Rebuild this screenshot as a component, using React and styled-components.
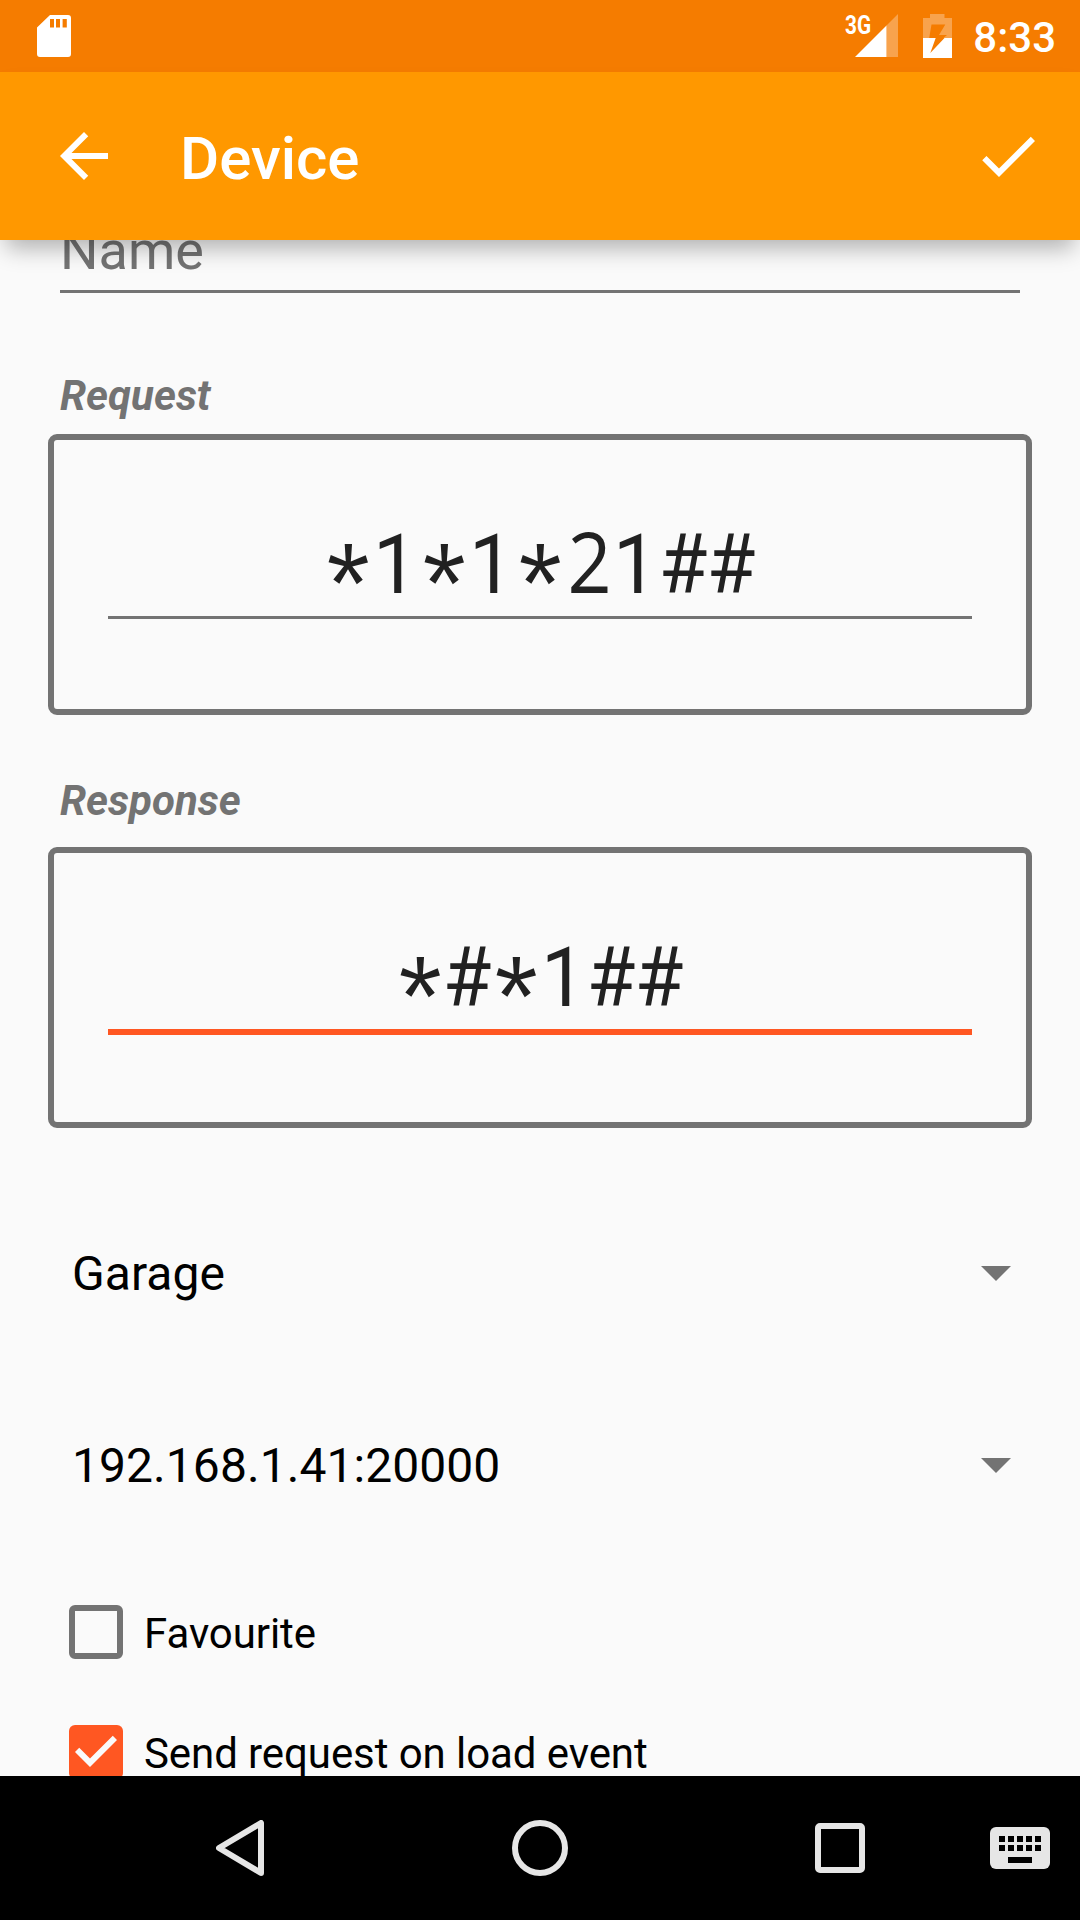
import React from 'react';
import styled, { createGlobalStyle } from 'styled-components';

const Global = createGlobalStyle`
  *, *::before, *::after { box-sizing: border-box; }
  body { margin: 0; background: #fafafa; }
  svg { display: block; flex: none; }
`;

const Screen = styled.div`
  width: 1080px;
  height: 1920px;
  display: flex;
  flex-direction: column;
  overflow: hidden;
  background: #fafafa;
  font-family: Roboto, 'Noto Sans', sans-serif;
`;

const StatusBar = styled.header`
  height: 72px;
  flex: none;
  display: flex;
  align-items: flex-start;
  padding: 14px 24px 0 37px;
  background: #f57c00;
  color: #fff;
`;

const StatusSpacer = styled.div`
  flex: 1;
`;

const NetworkLabel = styled.span`
  width: 10px;
  white-space: nowrap;
  font-size: 26px;
  line-height: 22px;
  font-weight: 700;
  transform: scaleX(0.8);
  transform-origin: left center;
`;

const Clock = styled.time`
  margin: -1px 0 0 21px;
  font-size: 42px;
  line-height: 50px;
  font-weight: 500;
`;

const AppBar = styled.div`
  height: 168px;
  flex: none;
  display: flex;
  align-items: center;
  padding: 0 36px 0 48px;
  background: #ff9800;
  color: #fff;
  box-shadow: 0 14px 22px -6px rgba(0, 0, 0, 0.3);
  position: relative;
  z-index: 1;
`;

const Title = styled.h1`
  flex: 1;
  margin: 5px 0 0 60px;
  font-size: 60px;
  line-height: 70px;
  font-weight: 500;
`;

const Form = styled.main`
  flex: 1;
  min-height: 0;
  overflow: hidden;
  display: flex;
  flex-direction: column;
`;

const NameField = styled.div`
  flex: none;
  height: 74px;
  margin: -21px 60px 0;
  border-bottom: 3px solid #737373;
  font-size: 54px;
  line-height: 63px;
  color: #737373;
`;

const SectionLabel = styled.h2`
  flex: none;
  margin: ${(p) => p.$above}px 60px ${(p) => p.$below}px;
  font-size: 42px;
  line-height: 50px;
  font-weight: 700;
  font-style: italic;
  color: #737373;
`;

const Frame = styled.section`
  flex: none;
  height: 281px;
  margin: 0 48px;
  padding: 0 54px;
  border: 6px solid #737373;
  border-radius: 9px;
`;

const CodeInput = styled.div`
  display: flex;
  justify-content: center;
  align-items: baseline;
  padding-top: 65px;
  font-family: 'Roboto Mono', 'Noto Sans', monospace;
  font-size: 84px;
  line-height: 111px;
  color: #212121;
  border-bottom: ${(p) => (p.$focused ? '6px solid #ff5722' : '3px solid #737373')};
`;

const Glyph = styled.span`
  width: 48px;
  height: 111px;
  flex: none;
  transform: translate(${(p) => p.$x || 0}px, ${(p) => p.$y || 0}px) scaleX(${(p) => p.$stretch || 1});
`;

const HumanistGlyph = styled(Glyph)`
  font-family: 'Open Sans', 'Noto Sans', sans-serif;
`;

const Spinner = styled.div`
  flex: none;
  height: 72px;
  margin-top: ${(p) => p.$above}px;
  padding: 0 69px 0 72px;
  display: flex;
  align-items: center;
  justify-content: space-between;
  font-size: 48px;
  letter-spacing: 0.06px;
  color: #000;
`;

const CheckRow = styled.div`
  flex: none;
  height: 54px;
  margin-top: ${(p) => p.$above}px;
  padding-left: 69px;
  display: flex;
  align-items: center;
  gap: 21px;
`;

const Box = styled.div`
  width: 54px;
  height: 54px;
  border-radius: 6px;
  border: ${(p) => (p.$checked ? 'none' : '6px solid #737373')};
  background: ${(p) => (p.$checked ? '#ff5722' : 'transparent')};
`;

const CheckLabel = styled.span`
  padding-top: 3px;
  font-size: 42px;
  line-height: 50px;
  letter-spacing: -0.08px;
  color: #000;
`;

const NavBar = styled.nav`
  height: 144px;
  flex: none;
  display: flex;
  align-items: center;
  padding: 0 30px 0 90px;
  background: #000;
`;

const NavButton = styled.div`
  width: 300px;
  display: flex;
  justify-content: center;
`;

const SdCard = () => (
  <svg width="34" height="43" viewBox="0 -1 34 43" fill="#fff">
    <path
      fillRule="evenodd"
      d="M13 0H31a3 3 0 0 1 3 3V39a3 3 0 0 1-3 3H3a3 3 0 0 1-3-3V12.5ZM13 4v8.5h4V4ZM19 4v8.5h4V4ZM25.6 4v8.5h4.2V4Z"
    />
  </svg>
);

const Signal = () => (
  <svg width="43" height="43" viewBox="0 0 43 43" fill="#fff">
    <path d="M31.5 11.5 43 0V43H31.5Z" opacity="0.3" />
    <path d="M0 43 31.5 11.5V43Z" />
  </svg>
);

const Battery = () => (
  <svg width="29" height="44" viewBox="0 0 29 44" fill="#fff">
    <path
      opacity="0.3"
      d="M0 4H7V0H21.5V4H29V24H20.5L24 21H16L22.3 10.5H8.5L6.2 24H0Z"
    />
    <path d="M0 24H12.7L7.3 39 21.5 24H29V44H0Z" />
  </svg>
);

const Arrow = () => (
  <svg width="30" height="15" viewBox="0 0 30 15" fill="#737373">
    <path d="M0 0H30L15 15Z" />
  </svg>
);

const glyphs = {
  '*': <Glyph $x={-2} $y={10}>*</Glyph>,
  1: <Glyph $x={-2} $stretch={0.93}>1</Glyph>,
  2: <HumanistGlyph $x={1.5} $stretch={0.92}>2</HumanistGlyph>,
  '#': <Glyph $x={-0.5} $stretch={0.94}>#</Glyph>,
};

const Code = ({ value }) =>
  value.split('').map((c, i) => <React.Fragment key={i}>{glyphs[c]}</React.Fragment>);

export default function App() {
  return (
    <Screen>
      <Global />
      <StatusBar>
        <SdCard />
        <StatusSpacer />
        <NetworkLabel>3G</NetworkLabel>
        <Signal />
        <svg width="25" height="1" />
        <Battery />
        <Clock>8:33</Clock>
      </StatusBar>
      <AppBar>
        <svg width="72" height="72" viewBox="0 0 24 24" fill="#fff">
          <path d="M20 11H7.83l5.59-5.59L12 4l-8 8 8 8 1.41-1.41L7.83 13H20v-2z" />
        </svg>
        <Title>Device</Title>
        <svg width="72" height="72" viewBox="0 0 24 24" fill="#fff">
          <path d="M9 16.17 4.83 12l-1.42 1.41L9 19 21 7l-1.41-1.41z" />
        </svg>
      </AppBar>
      <Form>
        <NameField>Name</NameField>
        <SectionLabel $above={78} $below={13}>Request</SectionLabel>
        <Frame>
          <CodeInput><Code value="*1*1*21##" /></CodeInput>
        </Frame>
        <SectionLabel $above={61} $below={21}>Response</SectionLabel>
        <Frame>
          <CodeInput $focused><Code value="*#*1##" /></CodeInput>
        </Frame>
        <Spinner $above={109}>Garage<Arrow /></Spinner>
        <Spinner $above={120}>192.168.1.41:20000<Arrow /></Spinner>
        <CheckRow $above={104}>
          <Box />
          <CheckLabel>Favourite</CheckLabel>
        </CheckRow>
        <CheckRow $above={66}>
          <Box $checked>
            <svg width="54" height="54" viewBox="3 3 18 18" fill="#fafafa">
              <path d="M10 17l-5-5 1.41-1.41L10 14.17l7.59-7.59L19 8l-9 9z" />
            </svg>
          </Box>
          <CheckLabel>Send request on load event</CheckLabel>
        </CheckRow>
      </Form>
      <NavBar>
        <NavButton>
          <svg width="48" height="56" viewBox="0 0 48 56" fill="none" stroke="#e6e6e6" strokeWidth="6" strokeLinejoin="round">
            <path d="M3 28 45 3V53Z" />
          </svg>
        </NavButton>
        <NavButton>
          <svg width="56" height="56" viewBox="0 0 56 56" fill="none" stroke="#e6e6e6" strokeWidth="6">
            <circle cx="28" cy="28" r="25" />
          </svg>
        </NavButton>
        <NavButton>
          <svg width="50" height="50" viewBox="0 0 50 50" fill="none" stroke="#e6e6e6" strokeWidth="6">
            <rect x="3" y="3" width="44" height="44" rx="2" />
          </svg>
        </NavButton>
        <svg width="60" height="42" viewBox="0 0 60 42">
          <rect width="60" height="42" rx="6" fill="#e6e6e6" />
          {[9, 18].map((y) =>
            [9, 18, 27, 36, 45].map((x) => <rect key={`${x}-${y}`} x={x} y={y} width="6" height="6" />)
          )}
          <rect x="18" y="30" width="24" height="6" />
        </svg>
      </NavBar>
    </Screen>
  );
}
